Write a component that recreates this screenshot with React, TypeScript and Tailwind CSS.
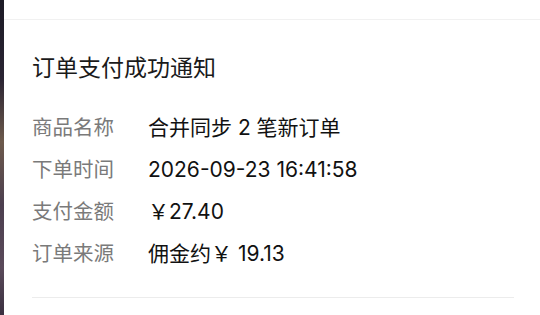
const rows: { label: string; value: string }[] = [
  { label: "商品名称", value: "合并同步 2 笔新订单" },
  { label: "下单时间", value: "2026-09-23 16:41:58" },
  { label: "支付金额", value: "￥27.40" },
  { label: "订单来源", value: "佣金约￥ 19.13" },
];

const App = () => {
  return (
    <div
      className="flex h-[315px] w-[540px] overflow-hidden bg-white"
      style={{ fontFamily: 'Inter, "Noto Sans CJK SC", sans-serif' }}
    >
      <div className="w-[4px] shrink-0 bg-[linear-gradient(180deg,#1c1b26_0%,#2a2433_25%,#6d5a4c_45%,#4c3f4f_65%,#5a4a5a_85%,#3a3040_100%)]" />

      <div className="flex flex-1 flex-col">
        <div className="h-[20px] shrink-0 border-b border-[#f1f1f1]" />

        <div className="flex flex-col pl-[28px] pr-[26px]">
          <h1 className="mt-[33px] text-[23px] leading-[30px] text-[#1a1a1a]">
            订单支付成功通知
          </h1>

          <div className="mt-[24px] flex flex-col">
            {rows.map((row) => (
              <div key={row.label} className="flex h-[42px] items-center">
                <span className="w-[116px] shrink-0 text-[20.5px] text-[#7a7a7a]">{row.label}</span>
                <span className="text-[21px] text-[#111111]">{row.value}</span>
              </div>
            ))}
          </div>

          <div className="mt-[22px] h-px bg-[#ececec]" />
        </div>
      </div>
    </div>
  );
};

export default App;
